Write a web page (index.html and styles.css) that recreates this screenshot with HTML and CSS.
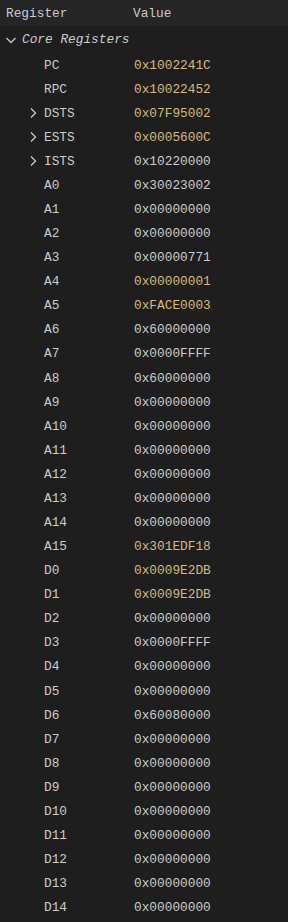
FILE: index.html
```html
<!DOCTYPE html>
<html>
<head>
<meta charset="utf-8">
<link rel="stylesheet" href="styles.css">
</head>
<body>
<div class="panel">
  <div class="header">
    <span class="col-name">Register</span>
    <span class="col-value">Value</span>
  </div>
  <div class="group">
    <svg class="chev" width="16" height="16" viewBox="0 0 16 16"><path d="M3.5 6l4.5 4.5L12.5 6" fill="none" stroke="#c5c5c5" stroke-width="1.4"/></svg>
    <span class="group-label">Core Registers</span>
  </div>
  <div class="rows" id="rows"></div>
</div>
<script>
const data = [
  ["PC","0x1002241C",1,0],["RPC","0x10022452",1,0],["DSTS","0x07F95002",1,1],["ESTS","0x0005600C",1,1],["ISTS","0x10220000",0,1],
  ["A0","0x30023002",0,0],["A1","0x00000000",0,0],["A2","0x00000000",0,0],["A3","0x00000771",0,0],["A4","0x00000001",1,0],
  ["A5","0xFACE0003",1,0],["A6","0x60000000",0,0],["A7","0x0000FFFF",0,0],["A8","0x60000000",0,0],["A9","0x00000000",0,0],
  ["A10","0x00000000",0,0],["A11","0x00000000",0,0],["A12","0x00000000",0,0],["A13","0x00000000",0,0],["A14","0x00000000",0,0],
  ["A15","0x301EDF18",1,0],["D0","0x0009E2DB",1,0],["D1","0x0009E2DB",1,0],["D2","0x00000000",0,0],["D3","0x0000FFFF",0,0],
  ["D4","0x00000000",0,0],["D5","0x00000000",0,0],["D6","0x60080000",0,0],["D7","0x00000000",0,0],["D8","0x00000000",0,0],
  ["D9","0x00000000",0,0],["D10","0x00000000",0,0],["D11","0x00000000",0,0],["D12","0x00000000",0,0],["D13","0x00000000",0,0],
  ["D14","0x00000000",0,0]
];
const rows = document.getElementById('rows');
for (const [n, v, changed, exp] of data) {
  const r = document.createElement('div');
  r.className = 'row';
  r.innerHTML = '<span class="twisty">' + (exp ? '<svg width="16" height="16" viewBox="0 0 16 16"><path d="M6 3.5l4.5 4.5L6 12.5" fill="none" stroke="#c5c5c5" stroke-width="1.4"/></svg>' : '') + '</span>' +
    '<span class="name">' + n + '</span><span class="value' + (changed ? ' changed' : '') + '">' + v + '</span>';
  rows.appendChild(r);
}
</script>
</body>
</html>
```
FILE: styles.css
```css
html, body {
  margin: 0;
  padding: 0;
  background: #1e1e1e;
}
.panel {
  width: 288px;
  font-family: "Liberation Mono", "DejaVu Sans Mono", monospace;
  font-size: 12.8px;
  color: #cccccc;
}
.header {
  display: flex;
  align-items: center;
  height: 26px;
  background: #252526;
  padding-left: 6px;
}
.col-name {
  width: 127px;
}
.group {
  display: flex;
  align-items: center;
  height: 27px;
  padding-left: 3px;
}
.chev {
  flex: none;
}
.group-label {
  font-style: italic;
  margin-left: 3px;
}
.row {
  display: flex;
  align-items: center;
  height: 24.09px;
  padding-left: 25px;
}
.twisty {
  width: 16px;
  height: 16px;
  flex: none;
  margin-right: 3px;
}
.twisty svg { display: block; }
.name {
  width: 90px;
}
.value {
  color: #cccccc;
}
.value.changed {
  color: #d7ba7d;
}
```
